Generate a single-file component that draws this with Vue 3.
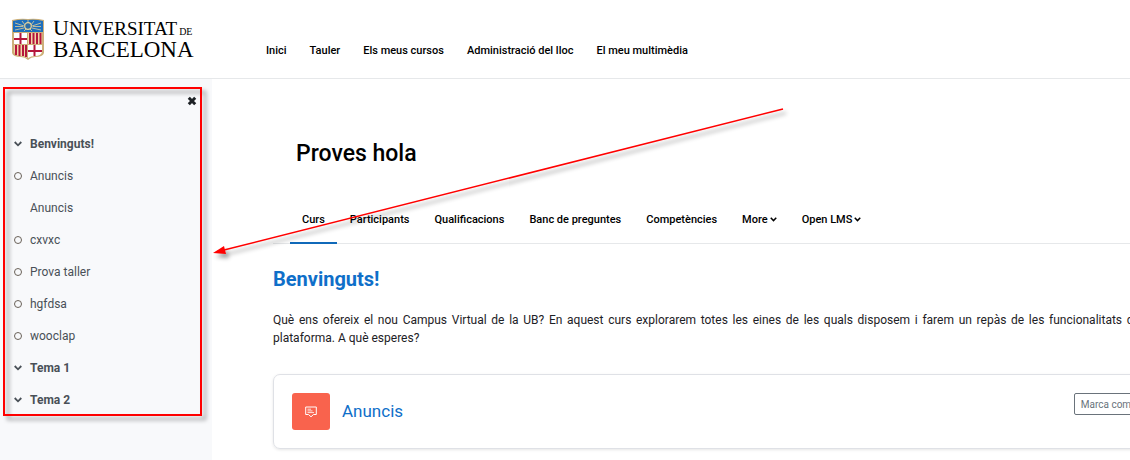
<template>
  <div class="page">
    <header class="topbar">
      <a href="#" class="brand" aria-label="Universitat de Barcelona">
        <svg class="shield" viewBox="0 0 32 42" aria-hidden="true">
          <path d="M0 2Q8 0 16 1Q24 0 32 2V35Q31 39 23 39Q19 39 16 42Q13 39 9 39Q1 39 0 35Z" fill="#cdb07a" />
          <path d="M1 3Q9 1 16 2Q23 1 31 3V14H1Z" fill="#1d6fbd" />
          <path d="M3 5l9 3M29 5l-9 3M3 8.500h8M29 8.500h-8M3 12l9-2M29 12l-9-2M10 3l3 4M22 3l-3 4M16 2v3M12 13l2-2M20 13l-2-2" stroke="#e3cf94" stroke-width="0.800" />
          <circle cx="16" cy="8" r="3.300" fill="#2e6da5" stroke="#ead59b" stroke-width="1.200" />
          <rect x="2" y="15" width="13" height="11" fill="#fff" />
          <path d="M8.500 15v11M2 21h13" stroke="#b5163c" stroke-width="2" />
          <rect x="16" y="15" width="14" height="11" fill="#f0d8a8" />
          <path d="M18 15v11M21.500 15v11M25 15v11M28.500 15v11" stroke="#b5163c" stroke-width="2" />
          <path d="M2 27H15V40Q13 38 9 38Q3 38 2 34Z" fill="#f0d8a8" />
          <path d="M4 27v10M7.500 27v11M11 27v11M14 27v12" stroke="#b5163c" stroke-width="2" />
          <path d="M16 27H30V34Q29 38 23 38Q19 38 16 40Z" fill="#fff" />
          <path d="M22.500 27v11M16 33h14" stroke="#b5163c" stroke-width="2" />
        </svg>
        <span class="wordmark">
          <span class="word-top"><span class="word-cap">U</span>NIVERSITAT<span class="word-de">DE</span></span>
          <span class="word-bottom">BARCELONA</span>
        </span>
      </a>
      <nav class="main-nav" aria-label="Principal">
        <a v-for="item in menu" :key="item" href="#">{{ item }}</a>
      </nav>
    </header>

    <div class="layout">
      <aside class="sidebar">
        <div class="sidebar-top">
          <button type="button" class="btn-close" aria-label="Tanca">
            <svg viewBox="0 0 10 10" width="10" height="10"><path d="M1.800 1.800l6.400 6.400M8.200 1.800l-6.400 6.400" /></svg>
          </button>
        </div>
        <ul class="index">
          <li v-for="(entry, i) in index" :key="i">
            <button v-if="entry.section" type="button" class="row section">
              <span class="mark"><svg viewBox="0 0 8 6" width="8" height="6"><path class="chevron" d="M0.700 1l3.300 3.300l3.300-3.300" /></svg></span>
              {{ entry.name }}
            </button>
            <a v-else href="#" class="row">
              <span class="mark"><span v-if="entry.pending" class="dot"></span></span>
              {{ entry.name }}
            </a>
          </li>
        </ul>
      </aside>

      <main class="content">
        <div class="content-inner">
          <h1>Proves hola</h1>
          <nav class="tabs" aria-label="Curs">
            <template v-for="tab in tabs" :key="tab.name">
              <button v-if="tab.menu" type="button" class="tab">
                {{ tab.name }}
                <svg viewBox="0 0 8 6" width="7" height="5"><path class="chevron" d="M0.700 1l3.300 3.300l3.300-3.300" /></svg>
              </button>
              <a v-else href="#" :class="['tab', tab.active ? 'active' : '']">{{ tab.name }}</a>
            </template>
          </nav>

          <h2>Benvinguts!</h2>
          <p class="intro">
            Què ens ofereix el nou Campus Virtual de la UB? En aquest curs explorarem totes les eines de les quals disposem i farem un repàs de les funcionalitats de la plataforma. A què esperes?
          </p>

          <section class="activity">
            <span class="activity-icon">
              <svg viewBox="0 0 12 12" width="12" height="12" aria-hidden="true">
                <path d="M0.700 1h10.600v7.500H8.500L6 10.800L3.500 8.500H0.700Z" />
                <path class="lines" d="M2.500 3.200h3.500M2.500 4.900h5M2.500 6.600h6.500" />
              </svg>
            </span>
            <a href="#" class="activity-name">Anuncis</a>
            <button type="button" class="btn-done">Marca com feta</button>
          </section>
        </div>
      </main>
    </div>

    <div class="highlight"></div>
    <svg class="arrow" viewBox="0 0 590 165" width="590" height="165" aria-hidden="true">
      <path d="M12 149L579 6" fill="none" stroke="#f00" stroke-width="1.500" />
      <path d="M9 150L20 143L22 151Z" fill="#f00" />
    </svg>
  </div>
</template>

<script setup>
import { ref } from 'vue'

const menu = ref(['Inici', 'Tauler', 'Els meus cursos', 'Administració del lloc', 'El meu multimèdia'])

const index = ref([
  { name: 'Benvinguts!', section: true },
  { name: 'Anuncis', pending: true },
  { name: 'Anuncis' },
  { name: 'cxvxc', pending: true },
  { name: 'Prova taller', pending: true },
  { name: 'hgfdsa', pending: true },
  { name: 'wooclap', pending: true },
  { name: 'Tema 1', section: true },
  { name: 'Tema 2', section: true }
])

const tabs = ref([
  { name: 'Curs', active: true },
  { name: 'Participants' },
  { name: 'Qualificacions' },
  { name: 'Banc de preguntes' },
  { name: 'Competències' },
  { name: 'More', menu: true },
  { name: 'Open LMS', menu: true }
])
</script>

<style>
body { margin: 0; background: #fff; }
</style>

<style scoped>
.page {
  position: relative;
  display: flex;
  flex-direction: column;
  min-height: 100vh;
  overflow: hidden;
  font-family: Roboto, "Liberation Sans", sans-serif;
  font-size: 12px;
  color: #1d2125;
}
a { color: inherit; text-decoration: none; }
button { font: inherit; color: inherit; background: none; border: none; padding: 0; cursor: pointer; }
.chevron { fill: none; stroke: currentColor; stroke-width: 1.800; }

.topbar { display: flex; align-items: center; gap: 70px; height: 78px; padding-left: 12px; border-bottom: 1px solid #e6e8ea; }
.brand { display: flex; align-items: center; gap: 9px; width: 184px; color: #000; }
.shield { width: 32px; height: 42px; flex: none; }
.wordmark { display: flex; flex-direction: column; font-family: "Liberation Serif", serif; white-space: nowrap; }
.word-top { font-size: 19px; line-height: 18px; }
.word-cap { font-size: 22px; }
.word-de { font-size: 10px; margin-left: 2px; }
.word-bottom { font-size: 23px; line-height: 18px; }
.main-nav { display: flex; gap: 23px; padding-top: 22px; font-size: 11px; font-weight: 500; color: #000; white-space: nowrap; }

.layout { display: flex; flex: 1; }
.sidebar { width: 212px; flex: none; background: #f8f9fb; color: #495057; }
.sidebar-top { display: flex; justify-content: flex-end; padding: 17px 15px 22px 0; }
.btn-close { display: flex; color: #1d2125; }
.btn-close path { stroke: currentColor; stroke-width: 3; }
.index { list-style: none; margin: 0; padding: 0 14px; }
.row { display: flex; align-items: center; gap: 8px; height: 32px; width: 100%; }
.section { font-weight: 700; }
.mark { display: flex; width: 8px; flex: none; }
.dot { width: 6px; height: 6px; border: 1px solid #6a6259; border-radius: 50%; }

.content { flex: 1; min-width: 0; padding-left: 61px; }
.content-inner { margin-right: -24px; }
h1 { margin: 0; padding: 61px 23px 0; font-size: 23px; line-height: 28px; font-weight: 500; color: #000; }
.tabs { display: flex; gap: 1px; margin-top: 27px; padding-left: 17px; border-bottom: 1px solid #e6e8ea; font-size: 11px; font-weight: 500; color: #000; white-space: nowrap; }
.tab { display: flex; align-items: center; gap: 2px; box-sizing: border-box; height: 49px; padding: 2px 12px 0; border-bottom: 2px solid transparent; margin-bottom: -1px; }
.tab.active { border-bottom-color: #1069b9; }
h2 { margin: 23px 0 0; font-size: 20px; line-height: 24px; font-weight: 700; color: #0f6fc9; }
.intro { margin: 20px 0 0; line-height: 18px; text-align: justify; }
.activity { display: flex; align-items: center; gap: 12px; margin: 27px -40px 0 0; padding: 18px; border: 1px solid #dfe1e6; border-radius: 7px; box-shadow: 0 1px 3px rgba(0, 0, 0, 0.1); }
.activity-icon { display: flex; align-items: center; justify-content: center; width: 38px; height: 37px; border-radius: 3px; background: #f9634d; }
.activity-icon path { fill: none; stroke: #fff; stroke-width: 1; }
.activity-icon .lines { stroke-width: 0.800; }
.activity-name { padding-bottom: 2px; font-size: 17px; color: #0f6fc9; }
.btn-done { margin: 0 17px 15px auto; height: 22px; padding: 0 6px; border: 1px solid #6a737b; border-radius: 2px; font-size: 10px; color: #6a737b; white-space: nowrap; }

/* Anotacions per sobre de la pàgina */
.highlight {
  position: absolute;
  top: 87px;
  left: 3px;
  width: 195px;
  height: 325px;
  border: 2px solid #f00;
  filter: drop-shadow(4px 4px 2px rgba(0, 0, 0, 0.4));
  pointer-events: none;
}
.arrow { position: absolute; top: 103px; left: 204px; filter: drop-shadow(3px 4px 2px rgba(0, 0, 0, 0.4)); pointer-events: none; }
</style>
